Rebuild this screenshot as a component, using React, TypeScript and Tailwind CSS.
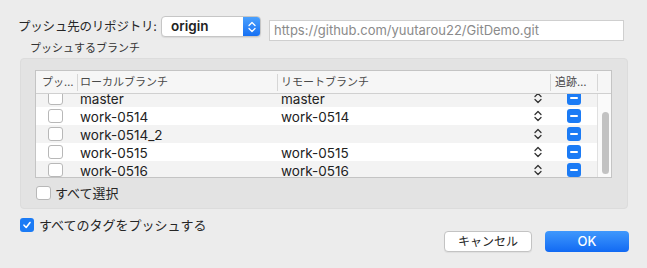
import React from "react";

const FONT = { fontFamily: '"Inter", "Noto Sans CJK JP", sans-serif' };

type Branch = { local: string; remote: string };

const branches: Branch[] = [
  { local: "master", remote: "master" },
  { local: "work-0514", remote: "work-0514" },
  { local: "work-0514_2", remote: "" },
  { local: "work-0515", remote: "work-0515" },
  { local: "work-0516", remote: "work-0516" },
];

function Stepper({ color = "#333" }: { color?: string }) {
  return (
    <svg width="8" height="12" viewBox="0 0 8 12" fill="none">
      <path d="M1 4.5 L4 1.5 L7 4.5" stroke={color} strokeWidth="1.3" strokeLinecap="round" strokeLinejoin="round" />
      <path d="M1 7.5 L4 10.5 L7 7.5" stroke={color} strokeWidth="1.3" strokeLinecap="round" strokeLinejoin="round" />
    </svg>
  );
}

function Checkbox({ checked = false }: { checked?: boolean }) {
  if (checked) {
    return (
      <div className="flex h-[14px] w-[14px] shrink-0 items-center justify-center rounded-[3px] bg-[#1b7bf5]">
        <svg width="10" height="10" viewBox="0 0 10 10" fill="none">
          <path d="M2 5.2 L4.2 7.5 L8 2.5" stroke="white" strokeWidth="1.6" strokeLinecap="round" strokeLinejoin="round" />
        </svg>
      </div>
    );
  }
  return <div className="h-[14px] w-[15px] shrink-0 rounded-[3px] border border-[#b8b8b8] bg-white" />;
}

function MinusBox() {
  return (
    <div className="flex h-[14px] w-[14px] items-center justify-center rounded-[3px] bg-[#1b7bf5]">
      <div className="h-[2px] w-[8px] rounded-full bg-white" />
    </div>
  );
}

function Sep() {
  return <div className="h-[17px] w-px shrink-0 bg-[#d6d6d6]" />;
}

export default function App() {
  return (
    <div className="h-[268px] w-[647px] overflow-hidden bg-[#ececec] pt-[16px] text-[#222]" style={FONT}>
      {/* repository row */}
      <div className="flex items-start pl-[18px]">
        <div className="h-[21px] w-[143px] whitespace-nowrap text-[12.5px] leading-[21px] tracking-[-0.2px] text-[#262626]">
          プッシュ先のリポジトリ:
        </div>
        <div className="flex h-[21px] w-[100px] shrink-0 items-center rounded-[4px] border border-[#c6c6c6] bg-white shadow-[0_1px_1px_rgba(0,0,0,0.08)]">
          <div className="flex-1 pl-[9px] text-[13.5px] font-semibold leading-[19px] text-[#222]">origin</div>
          <div className="flex h-[19px] w-[17px] items-center justify-center rounded-r-[3px] bg-gradient-to-b from-[#4aa0fd] to-[#1670f3]">
            <Stepper color="#fff" />
          </div>
        </div>
        <div className="ml-[8px] mt-[4px] flex h-[21px] w-[355px] shrink-0 items-center border border-[#cfcfcf] bg-white pl-[4px] text-[13px] text-[#8a8a8a]">
          https://github.com/yuutarou22/GitDemo.git
        </div>
      </div>

      <div className="h-[14px] whitespace-nowrap pl-[30px] text-[11px] leading-[14px] text-[#333]">プッシュするブランチ</div>

      {/* group box */}
      <div className="ml-[20px] mt-[3px] h-[151px] w-[608px] rounded-[4px] border border-[#dcdcdc] bg-[#e3e3e3] pl-[14px] pt-[11px]">
        <div className="h-[108px] w-[577px] overflow-hidden border border-[#c4c4c4] bg-white">
          <div className="flex h-[23px] items-center whitespace-nowrap border-b border-[#d0d0d0] bg-[#f6f6f6] text-[11px] text-[#4a4a4a]">
            <div className="w-[41px] shrink-0 pl-[6px]">プッ…</div>
            <Sep />
            <div className="w-[199px] shrink-0 pl-[2px]">ローカルブランチ</div>
            <Sep />
            <div className="w-[272px] shrink-0 pl-[3px]">リモートブランチ</div>
            <Sep />
            <div className="w-[46px] shrink-0 pl-[4px]">追跡…</div>
            <Sep />
          </div>
          <div className="flex h-[84px]">
            <div className="w-[561px] overflow-hidden">
              <div className="-mt-[5px]">
                {branches.map((b, i) => (
                  <div
                    key={b.local}
                    className={`flex h-[18px] items-center text-[13.5px] leading-[18px] ${i % 2 === 0 ? "bg-[#f3f3f3]" : "bg-white"}`}
                  >
                    <div className="flex w-[41px] pl-[12px]">
                      <Checkbox />
                    </div>
                    <div className="w-[200px] pl-[3px] pt-[1px]">{b.local}</div>
                    <div className="flex w-[273px] items-center justify-between pl-[4px] pr-[8px]">
                      <span className="pt-[1px]">{b.remote}</span>
                      <Stepper />
                    </div>
                    <div className="flex w-[47px] justify-center">
                      <MinusBox />
                    </div>
                  </div>
                ))}
              </div>
            </div>
            <div className="flex-1 border-l border-[#e0e0e0] bg-[#fafafa] pl-[4px] pt-[18px]">
              <div className="h-[62px] w-[7px] rounded-full bg-[#c2c2c2]" />
            </div>
          </div>
        </div>
        <div className="mt-[8px] flex items-center gap-[4px] pl-[1px] text-[13px] text-[#262626]">
          <Checkbox />
          <span className="leading-[14px]">すべて選択</span>
        </div>
      </div>

      {/* bottom row */}
      <div className="flex items-start pl-[20px] pr-[18px]">
        <div className="mt-[9px] flex flex-1 items-center gap-[5px] text-[13px] text-[#262626]">
          <Checkbox checked />
          <span className="leading-[14px]">すべてのタグをプッシュする</span>
        </div>
        <div className="mt-[22px] flex gap-[13px]">
          <div className="flex h-[21px] w-[88px] items-center justify-center rounded-[4px] border border-[#c3c3c3] bg-white text-[12px] text-[#262626] shadow-[0_1px_1px_rgba(0,0,0,0.06)]">
            キャンセル
          </div>
          <div className="flex h-[21px] w-[84px] items-center justify-center rounded-[4px] bg-gradient-to-b from-[#3f98fc] to-[#1169f3] text-[13px] font-medium text-white">
            OK
          </div>
        </div>
      </div>
    </div>
  );
}
